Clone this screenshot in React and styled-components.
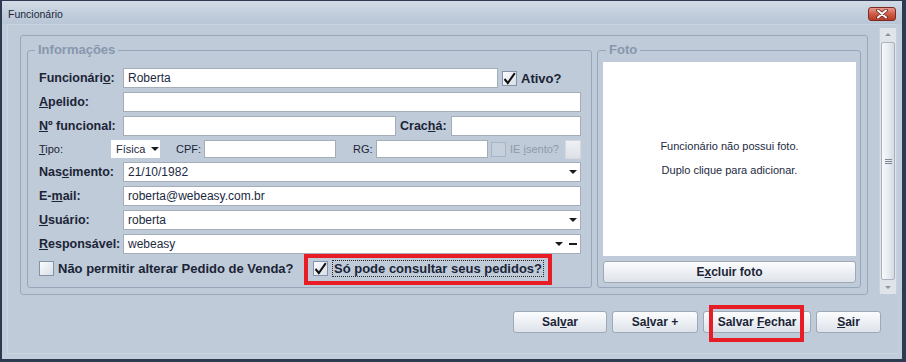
import React from 'react';
import styled, { createGlobalStyle } from 'styled-components';

const GlobalStyle = createGlobalStyle`
	html, body {
		margin: 0;
		padding: 0;
		background: #bfcbd9;
	}
	* {
		box-sizing: border-box;
	}
`;

const FONT = `"Liberation Sans", Arial, sans-serif`;

const Window = styled.div`
	position: relative;
	width: 906px;
	height: 362px;
	display: flex;
	flex-direction: column;
	background: #c1cddb;
	border-style: solid;
	border-color: #2d3a50;
	border-width: 1px 4px 3px 2px;
	font-family: ${FONT};
	overflow: hidden;
`;

const TitleBar = styled.div`
	height: 23px;
	flex: none;
	display: flex;
	align-items: center;
	justify-content: space-between;
	padding: 3px 6px 0 6px;
	background: linear-gradient(#d2dbe6, #c2cedc 55%, #b9c6d6);
`;

const Title = styled.span`
	font-size: 10.5px;
	color: #1b273a;
`;

const CloseButton = styled.div`
	width: 28px;
	height: 14px;
	border: 1px solid #7b2c22;
	border-radius: 3px;
	background: linear-gradient(#e69b8e, #cf5a47 50%, #b63b28);
	display: flex;
	align-items: center;
	justify-content: center;
`;

const Client = styled.div`
	flex: 1;
	margin: 0 5px 5px 5px;
	border-top: 1px solid #cbd5e1;
	border-left: 1px solid #cbd5e1;
	border-bottom: 1px solid #ced8e3;
	background: #bfcbd9;
	display: flex;
	flex-direction: column;
`;

const TopArea = styled.div`
	display: flex;
	align-items: flex-start;
`;

const Panel = styled.div`
	margin: 10px 0 0 12px;
	width: 848px;
	border: 1px solid #9aa8bb;
	border-radius: 3px;
	padding: 7px 6px 6px 6px;
	display: flex;
	gap: 5px;
	align-items: stretch;
`;

const Group = styled.fieldset`
	margin: 0;
	min-width: 0;
	width: ${(p) => p.$w}px;
	border: 1px solid #97a6ba;
	border-radius: 3px;
	padding: ${(p) => p.$pad};
	display: flex;
	flex-direction: column;
	gap: ${(p) => p.$gap || 0}px;
`;

const Legend = styled.legend`
	margin-left: ${(p) => p.$ml}px;
	padding: 0 3px;
	font: bold 13px/14px ${FONT};
	color: #8797ad;
`;

const Row = styled.div`
	display: flex;
	align-items: center;
	height: ${(p) => p.$h || 20}px;
	margin-bottom: ${(p) => (p.$last ? 0 : 4)}px;
`;

const Label = styled.span`
	flex: none;
	width: ${(p) => (p.$w ? `${p.$w}px` : 'auto')};
	margin-left: ${(p) => p.$ml || 0}px;
	font-size: ${(p) => (p.$small ? 11 : 12.5)}px;
	font-weight: ${(p) => (p.$small ? 'normal' : 'bold')};
	color: ${(p) => (p.$disabled ? '#8e9aab' : '#1b2436')};
	white-space: nowrap;
`;

const Field = styled.div`
	flex: ${(p) => (p.$w ? 'none' : 1)};
	width: ${(p) => (p.$w ? `${p.$w}px` : 'auto')};
	height: 100%;
	background: #fff;
	border: 1px solid ${(p) => (p.$plain ? '#fff' : '#a5adb8')};
	display: flex;
	align-items: center;
	gap: 6px;
	padding: 0 3px 0 4px;
	font-size: ${(p) => (p.$small ? 11 : 12)}px;
	color: #1c2a42;
	white-space: nowrap;
`;

const Value = styled.span`
	flex: 1;
`;

const Arrow = styled.span`
	width: 0;
	height: 0;
	border-left: 4px solid transparent;
	border-right: 4px solid transparent;
	border-top: 4px solid #1a1a1a;
`;

const Dash = styled.span`
	width: 8px;
	height: 2px;
	background: #1a1a1a;
`;

const Box = styled.span`
	flex: none;
	width: 15px;
	height: 15px;
	margin-left: ${(p) => p.$ml || 0}px;
	margin-right: 4px;
	border: 1px solid ${(p) => (p.$disabled ? '#a9b5c5' : '#8393a8')};
	background: ${(p) =>
		p.$disabled ? '#c6d0dc' : 'linear-gradient(135deg, #fbfcfd, #d8dfe8)'};
	display: flex;
	align-items: center;
	justify-content: center;
`;

const CheckItem = styled.div`
	flex: none;
	display: flex;
	align-items: center;
	width: ${(p) => (p.$w ? `${p.$w}px` : 'auto')};
	font-size: 13px;
	font-weight: bold;
	color: #1b2436;
`;

const Focus = styled.span`
	border: 1px dotted #2a2a2a;
	padding: 0 1px;
	line-height: 15px;
`;

const GrayBox = styled.span`
	margin-left: auto;
	width: 16px;
	height: 19px;
	border: 1px solid #d3d9e0;
	background: linear-gradient(#eef0f3, #dde1e6);
`;

const PhotoArea = styled.div`
	flex: 1;
	background: #fff;
	display: flex;
	flex-direction: column;
	align-items: center;
	justify-content: center;
	gap: 12px;
	font-size: 11px;
	color: #1c2a42;
	padding-bottom: 2px;
`;

const Button = styled.div`
	flex: none;
	width: ${(p) => (p.$w ? `${p.$w}px` : 'auto')};
	height: 22px;
	border: 1px solid #9ea8b6;
	border-radius: 3px;
	background: linear-gradient(#fbfcfd, #eef1f5 45%, #dde3ea);
	display: flex;
	align-items: center;
	justify-content: center;
	font-size: 12px;
	font-weight: bold;
	color: #1b2436;
	white-space: pre;
`;

const ButtonBar = styled.div`
	margin-top: 16px;
	padding-right: 16px;
	display: flex;
	justify-content: flex-end;
	gap: 5px;
`;

const ScrollTrack = styled.div`
	margin: 3px 0 0 11px;
	width: 18px;
	height: 266px;
	background: #dfe4eb;
	border-left: 1px solid #c9d1db;
	border-right: 1px solid #c9d1db;
	display: flex;
	flex-direction: column;
	align-items: center;
	padding: 5px 0;
`;

const ScrollArrow = styled.span`
	width: 0;
	height: 0;
	border-left: 3px solid transparent;
	border-right: 3px solid transparent;
	border-${(p) => (p.$down ? 'top' : 'bottom')}: 3px solid #8a94a2;
`;

const Thumb = styled.div`
	margin: 6px 0;
	width: 14px;
	flex: 1;
	border: 1px solid #a9b2be;
	border-radius: 2px;
	background: linear-gradient(90deg, #f7f9fb, #e6eaf0 60%, #d4dae3);
	display: flex;
	flex-direction: column;
	align-items: center;
	justify-content: center;
	gap: 1px;
`;

const Grip = styled.span`
	width: 7px;
	height: 1px;
	background: #7e8998;
`;

const Highlight = styled.div`
	position: absolute;
	left: ${(p) => p.$x}px;
	top: ${(p) => p.$y}px;
	width: ${(p) => p.$w}px;
	height: ${(p) => p.$h}px;
	border: 4px solid #e81c25;
	pointer-events: none;
`;

const Check = () => (
	<svg width='13' height='13' viewBox='0 0 13 13'>
		<path d='M1.5 7 L4.8 11 L11.8 1.2' fill='none' stroke='#111' strokeWidth='2' />
	</svg>
);

const CloseIcon = () => (
	<svg width='14' height='10' viewBox='0 0 14 10'>
		<path d='M3 1.5 L11 8.5 M11 1.5 L3 8.5' stroke='#6a2017' strokeWidth='3.6' strokeLinecap='round' />
		<path d='M3 1.5 L11 8.5 M11 1.5 L3 8.5' stroke='#fff' strokeWidth='2' strokeLinecap='round' />
	</svg>
);

const App = () => {
	return (
		<>
			<GlobalStyle />
			<Window>
				<TitleBar>
					<Title>Funcionário</Title>
					<CloseButton>
						<CloseIcon />
					</CloseButton>
				</TitleBar>
				<Client>
					<TopArea>
						<Panel>
							<Group $w={565} $pad='11px 10px 9px 11px'>
								<Legend $ml={-4}>Informações</Legend>
								<Row>
									<Label $w={84}>
										Funcionári<u>o</u>:
									</Label>
									<Field $w={375}>Roberta</Field>
									<CheckItem>
										<Box $ml={4}>
											<Check />
										</Box>
										Ativo?
									</CheckItem>
								</Row>
								<Row>
									<Label $w={84}>
										<u>A</u>pelido:
									</Label>
									<Field />
								</Row>
								<Row>
									<Label $w={84}>
										<u>N</u>º funcional:
									</Label>
									<Field $w={273} />
									<Label $w={51} $ml={4}>
										Crac<u>h</u>á:
									</Label>
									<Field />
								</Row>
								<Row $h={18}>
									<Label $w={72} $small>
										<u>T</u>ipo:
									</Label>
									<Field $w={49} $small $plain>
										<Value>Física</Value>
										<Arrow />
									</Field>
									<Label $w={28} $ml={16} $small>
										CPF:
									</Label>
									<Field $w={132} />
									<Label $w={23} $ml={17} $small>
										RG:
									</Label>
									<Field $w={112} />
									<Box $ml={3} $disabled />
									<Label $small $disabled>
										IE <u>i</u>sento?
									</Label>
									<GrayBox />
								</Row>
								<Row>
									<Label $w={84}>
										Nas<u>c</u>imento:
									</Label>
									<Field>
										<Value>21/10/1982</Value>
										<Arrow />
									</Field>
								</Row>
								<Row>
									<Label $w={84}>
										E-<u>m</u>ail:
									</Label>
									<Field>roberta@webeasy.com.br</Field>
								</Row>
								<Row>
									<Label $w={84}>
										<u>U</u>suário:
									</Label>
									<Field>
										<Value>roberta</Value>
										<Arrow />
									</Field>
								</Row>
								<Row>
									<Label $w={84}>
										<u>R</u>esponsável:
									</Label>
									<Field>
										<Value>webeasy</Value>
										<Arrow />
										<Dash />
									</Field>
								</Row>
								<Row $last>
									<CheckItem $w={274}>
										<Box />
										Não permitir alterar Pedido de Venda?
									</CheckItem>
									<CheckItem>
										<Box>
											<Check />
										</Box>
										<Focus>Só pode consultar seus pedidos?</Focus>
									</CheckItem>
								</Row>
							</Group>
							<Group $w={264} $pad='5px 4px 4px 5px' $gap={5}>
								<Legend $ml={3}>Foto</Legend>
								<PhotoArea>
									<span>Funcionário não possui foto.</span>
									<span>Duplo clique para adicionar.</span>
								</PhotoArea>
								<Button>
									<span>
										E<u>x</u>cluir foto
									</span>
								</Button>
							</Group>
						</Panel>
						<ScrollTrack>
							<ScrollArrow />
							<Thumb>
								<Grip />
								<Grip />
								<Grip />
							</Thumb>
							<ScrollArrow $down />
						</ScrollTrack>
					</TopArea>
					<ButtonBar>
						<Button $w={94}>
							<span>
								Sal<u>v</u>ar
							</span>
						</Button>
						<Button $w={86}>
							<span>
								Sa<u>l</u>var +
							</span>
						</Button>
						<Button $w={108}>
							<span>
								Salvar <u>F</u>echar
							</span>
						</Button>
						<Button $w={65}>
							<span>
								<u>S</u>air
							</span>
						</Button>
					</ButtonBar>
				</Client>
				<Highlight $x={302} $y={253} $w={248} $h={31} />
				<Highlight $x={707} $y={304} $w={95} $h={37} />
			</Window>
		</>
	);
};

export default App;
